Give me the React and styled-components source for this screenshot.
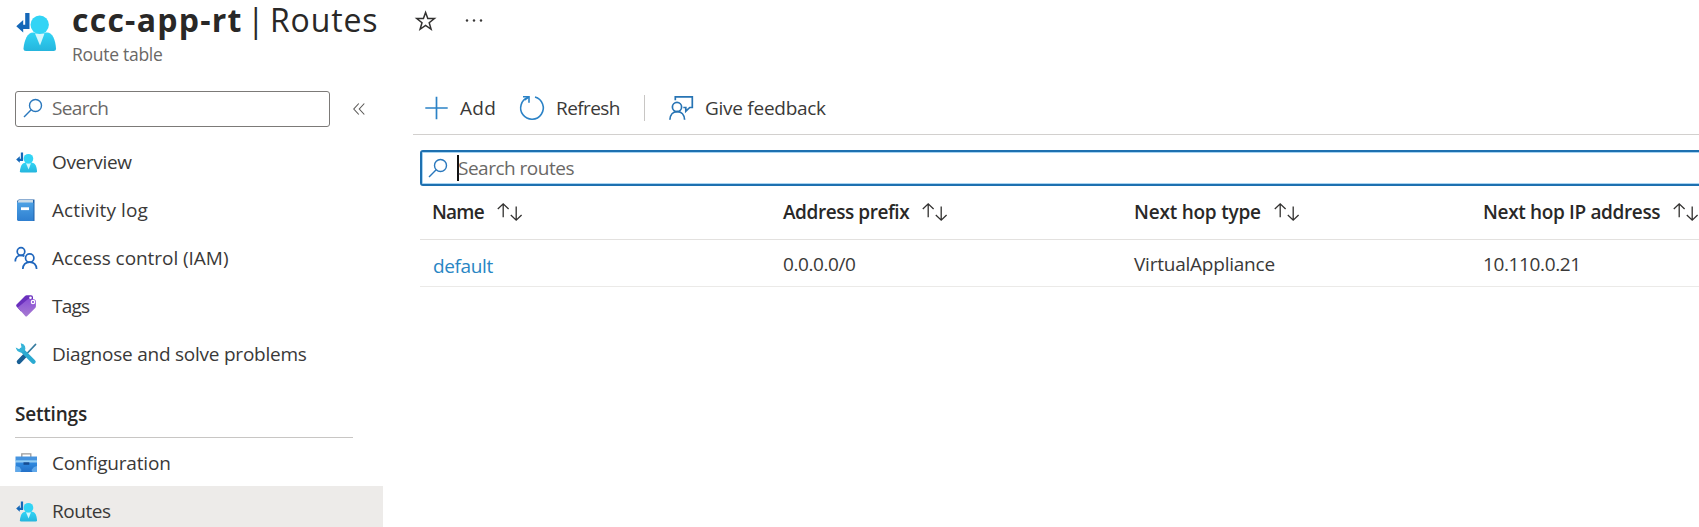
import React from "react";
import styled, { createGlobalStyle } from "styled-components";

const Global = createGlobalStyle`
  * { box-sizing: border-box; }
  body { margin: 0; background: #fff; overflow: hidden; }
  #root {
    font-family: "Open Sans", "Noto Sans", sans-serif;
    font-size: 19px;
    color: #3a3938;
  }
`;

const Page = styled.div`
  display: flex;
  flex-direction: column;
  width: 1699px;
  height: 527px;
  overflow: hidden;
`;

const Label = styled.span`
  white-space: nowrap;
  letter-spacing: ${(p) => p.$tracking || 0}px;
`;

/* Header */
const Header = styled.header`
  display: flex;
  flex: none;
  height: 91px;
  padding-left: 16px;
`;

const HeaderIcon = styled.div`
  flex: none;
  width: 40px;
  margin-top: 12px;
  margin-right: 16px;
`;

const Titles = styled.div`
  width: 344px;
`;

const Title = styled.h1`
  display: flex;
  margin: 0;
  height: 40px;
  line-height: 40px;
  font-size: 32px;
  font-weight: 400;
  color: #292827;
`;

const ResourceName = styled(Label)`
  width: 175px;
  font-weight: 700;
`;

const TitleDivider = styled.span`
  width: 23px;
`;

const Subtitle = styled.div`
  height: 30px;
  line-height: 29px;
  font-size: 17.5px;
  color: #6a6866;
`;

const HeaderActions = styled.div`
  display: flex;
  height: 41px;
  align-items: center;
  gap: 29px;
`;

/* Layout */
const Body = styled.div`
  display: flex;
  flex: 1;
  min-height: 0;
`;

const Sidebar = styled.aside`
  flex: none;
  width: 383px;
`;

const SearchRow = styled.div`
  display: flex;
  align-items: center;
  gap: 23px;
  height: 36px;
  margin: 0 0 11px 15px;
`;

const SideSearch = styled.div`
  display: flex;
  align-items: center;
  width: 315px;
  height: 36px;
  padding-left: 7px;
  padding-bottom: 2px;
  gap: 9px;
  border: 1px solid #7c7a78;
  border-radius: 3px;
  color: #6a6866;
`;

const NavItem = styled.a`
  display: flex;
  align-items: center;
  height: 48px;
  padding-left: 14px;
  gap: 14px;
  background: ${(p) => (p.$active ? "#edebe9" : "transparent")};
`;

const NavGroup = styled.nav`
  ${NavItem} {
    padding-top: ${(p) => p.$shift || 0}px;
  }
`;

const Section = styled.h2`
  display: flex;
  align-items: center;
  height: 60px;
  margin: 0 30px 0 15px;
  padding-top: 13px;
  border-bottom: 1px solid #c8c6c4;
  font-size: 19px;
  font-weight: 600;
  color: #292827;
`;

/* Main pane */
const Main = styled.main`
  flex: 1;
  min-width: 0;
  padding-left: 30px;
`;

const Toolbar = styled.div`
  display: flex;
  align-items: center;
  height: 44px;
  padding: 0 0 10px 10px;
  border-bottom: 1px solid #d2d0ce;
`;

const Command = styled.button`
  display: flex;
  align-items: center;
  gap: ${(p) => p.$gap}px;
  width: ${(p) => p.$width}px;
  height: 34px;
  padding: 0;
  border: 0;
  background: none;
  font: inherit;
  color: inherit;
`;

const Separator = styled.i`
  width: 1px;
  height: 26px;
  margin: 0 24px 0 0;
  background: #c8c6c4;
`;

const RouteSearch = styled.div`
  display: flex;
  align-items: center;
  height: 36px;
  margin: 15px -4px 0 7px;
  padding-left: 6px;
  border: 2px solid #1e70b0;
  border-radius: 3px;
  box-shadow: inset 0 0 0 1px #a8d4f2;
  color: #6a6866;
`;

const Caret = styled.i`
  width: 2px;
  height: 26px;
  margin: 0 -1px 0 9px;
  background: #111;
`;

const Table = styled.div`
  margin-left: 7px;
`;

const Row = styled.div`
  display: grid;
  grid-template-columns: 351px 351px 349px 1fr;
  align-items: center;
  height: ${(p) => p.$height}px;
  padding-left: 12px;
  border-bottom: 1px solid ${(p) => (p.$head ? "#e3e1df" : "#ebeae8")};
`;

const HeadCell = styled.div`
  display: flex;
  align-items: center;
  gap: 13px;
  padding-bottom: 2px;
  font-weight: 600;
  color: #292827;
`;

const Cell = styled.div`
  padding-top: 1px;
`;

const LinkCell = styled.a`
  padding: 5px 0 0 1px;
  color: #2886c4;
`;

/* Icons */
const Svg = styled.svg`
  display: block;
  flex: none;
  overflow: visible;
`;

const RouteTableIcon = ({ size = 40, id }) => (
  <Svg width={size} height={size} viewBox="0 0 40 40">
    <defs>
      <linearGradient id={id} x1="0" y1="0" x2="0" y2="1">
        <stop offset="0" stopColor="#32d4f5" />
        <stop offset="1" stopColor="#25b5dd" />
      </linearGradient>
    </defs>
    <path d="M9.2 1h4.3v16H7.2v3.600L.3 14.300l6.900-6.200v4.600h2z" fill="#1467b8" />
    <path d="M7.500 36.500C8.300 28 11.500 20.500 17 20.500h14c5.500 0 8.500 7.500 9 16q0 2.500-2.500 2.500H10q-2.500 0-2.500-2.500z" fill={`url(#${id})`} />
    <path d="M19 21.500h9.500L24 33.500z" fill="#d5f7fd" />
    <circle cx="23.700" cy="12.800" r="9.200" fill="#32d4f5" />
  </Svg>
);

const SearchIcon = () => (
  <Svg width="20" height="20" viewBox="0 0 20 20" fill="none" stroke="#2a78bd" strokeWidth="1.400">
    <circle cx="12.500" cy="7.500" r="6" />
    <path d="M8.200 11.800 1 19" />
  </Svg>
);

const StarIcon = () => (
  <Svg width="20" height="20" viewBox="0 0 20 20" fill="none" stroke="#323130" strokeWidth="1.500">
    <path d="M9.600 1.400l2.200 6.200h6.600l-5.200 4.100 1.900 6.600-5.500-3.800-5.500 3.800L6 11.700.800 7.600h6.600z" />
  </Svg>
);

const MoreIcon = () => (
  <Svg width="18" height="4" viewBox="0 0 18 4" fill="#3a3938">
    <circle cx="2" cy="1.500" r="1.200" />
    <circle cx="9" cy="1.500" r="1.200" />
    <circle cx="16" cy="1.500" r="1.200" />
  </Svg>
);

const CollapseIcon = () => (
  <Svg width="12" height="12" viewBox="0 0 12 12" fill="none" stroke="#5a5856" strokeWidth="1.100">
    <path d="M5.800.5.800 6l5 5.500M11.300.5l-5 5.500 5 5.500" />
  </Svg>
);

const LogIcon = () => (
  <Svg width="24" height="24" viewBox="0 0 24 24">
    <defs>
      <linearGradient id="log" x1="0" y1="0" x2="0" y2="1">
        <stop offset="0" stopColor="#4ba0e4" />
        <stop offset="1" stopColor="#2f7fd0" />
      </linearGradient>
    </defs>
    <path d="M5 1.500h15.500v21.500H5q-2-.3-2-2V4q.2-2.200 2-2.500z" fill="#1d5fa8" />
    <path d="M4.500 2H19v3H3.500z" fill="#c9dbe9" />
    <path d="M3 4.500h15.500q1 0 1 1V23H5q-2 0-2-2z" fill="url(#log)" />
    <path d="M7 9.300h8v2.800H7z" fill="#fff" />
  </Svg>
);

const AccessIcon = () => (
  <Svg width="24" height="24" viewBox="0 0 24 24" fill="none" stroke="#1f66bd" strokeWidth="1.700">
    <circle cx="7" cy="5.500" r="3.800" />
    <path d="M1.300 15.500c0-4 2.500-6.200 5.700-6.200 1.300 0 2.500.4 3.400 1" />
    <circle cx="15.700" cy="12" r="4.200" />
    <path d="M8.800 23c.3-4.200 3-6.800 6.900-6.800s6.600 2.600 6.900 6.800" />
  </Svg>
);

const TagsIcon = () => (
  <Svg width="24" height="24" viewBox="0 0 24 24">
    <defs>
      <linearGradient id="tag" x1="0" y1="0" x2="0" y2="1">
        <stop offset="0" stopColor="#8b50d6" />
        <stop offset="1" stopColor="#a67ad2" />
      </linearGradient>
    </defs>
    <path d="M2.500 10.500 11 2q.7-.7 1.700-.7H17q2 0 2 2v7L7 17.500l-4.500-5q-.8-1 0-2z" fill="#6a30bd" />
    <path d="M3.800 13.500 13.500 5.500q.8-.7 1.800-.7l4.700.5q1.800.3 1.900 2v5q0 1-.7 1.700l-8 8q-1 1-2 0z" fill="url(#tag)" />
    <circle cx="16.500" cy="3.700" r="1.300" fill="#fff" />
    <circle cx="19" cy="8" r="1.700" fill="#8b50d6" stroke="#fff" strokeWidth="1.200" />
  </Svg>
);

const DiagnoseIcon = () => (
  <Svg width="24" height="24" viewBox="0 0 24 24" fill="none" strokeLinecap="round">
    <path d="M21.500 2.500 13 11.500" stroke="#377b9f" strokeWidth="1.800" />
    <path d="M10.500 14 5 19.800" stroke="#195f95" strokeWidth="4.500" />
    <path d="M7.500 7.800 19.500 19.700" stroke="#2baad1" strokeWidth="4.400" />
    <path d="M7.500 2.200c3 .8 4.200 3.800 2.500 6.300-2 2.500-6.300 1.500-7.300-1.800L5.500 8l2.700-2.300z" fill="#35b4d8" stroke="#35b4d8" strokeWidth="1.200" />
  </Svg>
);

const ConfigurationIcon = () => (
  <Svg width="24" height="24" viewBox="0 0 24 24">
    <defs>
      <linearGradient id="box" x1="0" y1="0" x2="0" y2="1">
        <stop offset="0" stopColor="#2f8be0" />
        <stop offset="1" stopColor="#2370c8" />
      </linearGradient>
    </defs>
    <path d="M7.800 6V2.800h9V6" fill="none" stroke="#9a9a9a" strokeWidth="1.300" />
    <path d="M1.500 5.500h21.500v5H1.500z" fill="#4794df" />
    <path d="M1.500 9.300h21.500v2H1.500z" fill="#91cdf5" />
    <path d="M1.500 11.300h21.500v9.700H1.500z" fill="url(#box)" />
    <path d="M9.500 11.300h5.800v2.500H9.500z" fill="#164c91" />
    <path d="M1.500 15l4 1 2 3-1 2h-5zM23 15l-3 1-2.500 3 1 2H23z" fill="#5fa8ea" />
  </Svg>
);

const PlusIcon = () => (
  <Svg width="24" height="24" viewBox="0 0 24 24" stroke="#2b82c6" strokeWidth="1.700">
    <path d="M13.500.800v22.400M2.300 12h22.400" />
  </Svg>
);

const RefreshIcon = () => (
  <Svg width="24" height="24" viewBox="0 0 24 24" fill="none" stroke="#2b82c6" strokeWidth="1.600">
    <path d="M15 1.100A11.300 11.300 0 1 1 8.300 1.300" />
    <path d="M3 .8h6v6" />
    <path d="M8.700 1.200 4.500 4" />
  </Svg>
);

const FeedbackIcon = () => (
  <Svg width="24" height="24" viewBox="0 0 24 24" fill="none" stroke="#2774b4" strokeWidth="1.700">
    <path d="M6.300 4.200V.9h17v10.600h-2.500l-4 3.700v-3.700h-2.500" />
    <circle cx="8" cy="11" r="4.600" />
    <path d="M.9 23.800c.2-4.900 3.100-8.100 7.300-8.100s7.200 3.200 7.400 8.100" />
  </Svg>
);

const SortIcon = () => (
  <Svg width="25" height="18" viewBox="0 0 25 18" fill="none" stroke="#323130" strokeWidth="1.300">
    <path d="M6.200 14.300V1M.8 6l5.400-5.200L11.600 6M19.200 3.500v13.300M13.800 12l5.400 5.200 5.400-5.200" />
  </Svg>
);

const IconBox = styled.span`
  display: flex;
  flex: none;
  align-items: center;
  justify-content: center;
  width: 24px;
  height: 24px;
`;

const NavLink = ({ icon, label, tracking, active }) => (
  <NavItem $active={active}>
    <IconBox>{icon}</IconBox>
    <Label $tracking={tracking}>{label}</Label>
  </NavItem>
);

const columns = [
  { label: "Name", tracking: -0.8 },
  { label: "Address prefix", tracking: -0.44 },
  { label: "Next hop type", tracking: -0.22 },
  { label: "Next hop IP address", tracking: -0.35 },
];

export default function App() {
  return (
    <Page>
      <Global />
      <Header>
        <HeaderIcon><RouteTableIcon id="rt-head" /></HeaderIcon>
        <Titles>
          <Title>
            <ResourceName $tracking={1.25}>ccc-app-rt</ResourceName>
            <TitleDivider>|</TitleDivider>
            <Label $tracking={0.85}>Routes</Label>
          </Title>
          <Subtitle><Label $tracking={-0.28}>Route table</Label></Subtitle>
        </Titles>
        <HeaderActions>
          <StarIcon />
          <MoreIcon />
        </HeaderActions>
      </Header>
      <Body>
        <Sidebar>
          <SearchRow>
            <SideSearch>
              <SearchIcon />
              <Label $tracking={-0.65}>Search</Label>
            </SideSearch>
            <CollapseIcon />
          </SearchRow>
          <NavGroup>
            <NavLink icon={<RouteTableIcon size={21} id="rt-overview" />} label="Overview" tracking={-0.35} />
            <NavLink icon={<LogIcon />} label="Activity log" tracking={0.1} />
            <NavLink icon={<AccessIcon />} label="Access control (IAM)" tracking={-0.05} />
            <NavLink icon={<TagsIcon />} label="Tags" tracking={-0.8} />
            <NavLink icon={<DiagnoseIcon />} label="Diagnose and solve problems" tracking={-0.23} />
          </NavGroup>
          <Section><Label $tracking={-0.2}>Settings</Label></Section>
          <NavGroup $shift={2}>
            <NavLink icon={<ConfigurationIcon />} label="Configuration" tracking={-0.2} />
            <NavLink icon={<RouteTableIcon size={21} id="rt-routes" />} label="Routes" tracking={-0.45} active />
          </NavGroup>
        </Sidebar>
        <Main>
          <Toolbar>
            <Command $gap={13} $width={97}><PlusIcon /><Label $tracking={0.3}>Add</Label></Command>
            <Command $gap={12} $width={124}><RefreshIcon /><Label $tracking={-0.6}>Refresh</Label></Command>
            <Separator />
            <Command $gap={12} $width={170}><FeedbackIcon /><Label $tracking={-0.27}>Give feedback</Label></Command>
          </Toolbar>
          <RouteSearch>
            <SearchIcon />
            <Caret />
            <Label $tracking={-0.5}>Search routes</Label>
          </RouteSearch>
          <Table>
            <Row $head $height={54}>
              {columns.map((c) => (
                <HeadCell key={c.label}>
                  <Label $tracking={c.tracking}>{c.label}</Label>
                  <SortIcon />
                </HeadCell>
              ))}
            </Row>
            <Row $height={47}>
              <LinkCell><Label $tracking={-0.37}>default</Label></LinkCell>
              <Cell><Label $tracking={-0.42}>0.0.0.0/0</Label></Cell>
              <Cell><Label $tracking={-0.23}>VirtualAppliance</Label></Cell>
              <Cell><Label $tracking={-0.38}>10.110.0.21</Label></Cell>
            </Row>
          </Table>
        </Main>
      </Body>
    </Page>
  );
}
